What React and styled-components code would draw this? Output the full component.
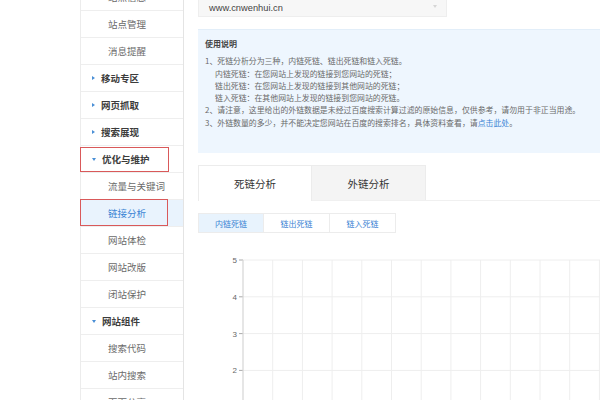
import React from "react";
import styled, { createGlobalStyle } from "styled-components";

const Global = createGlobalStyle`
  html, body { margin: 0; padding: 0; background: #fff; }
  body { width: 600px; height: 400px; overflow: hidden; font-family: "Noto Sans CJK SC", "Microsoft YaHei", sans-serif; }
`;

const Page = styled.div`
  display: flex;
  width: 600px;
  height: 400px;
  overflow: hidden;
`;

const Spacer = styled.div`
  width: 80px;
  flex: none;
`;

const Sidebar = styled.nav`
  width: 104px;
  flex: none;
  margin-top: -16px;
  border-left: 1px solid #ececec;
  border-right: 1px solid #e4e4e4;
  box-sizing: border-box;
  display: flex;
  flex-direction: column;
`;

const Row = styled.div`
  position: relative;
  height: 27px;
  flex: none;
  box-sizing: border-box;
  border-bottom: 1px solid #eeeeee;
  display: flex;
  align-items: center;
  font-size: 9.5px;
  padding-left: ${(p) => (p.$group ? "11px" : "27px")};
  color: ${(p) => (p.$active ? "#3a84d4" : p.$group ? "#3c3c3c" : "#6a6a6a")};
  background: ${(p) => (p.$active ? "#e9f3fd" : "#fff")};
  font-weight: ${(p) => (p.$group ? 600 : 400)};
  white-space: nowrap;
`;

const Arrow = styled.span`
  width: 0;
  height: 0;
  margin-right: 6px;
  ${(p) =>
    p.$open
      ? `border-left: 2.5px solid transparent; border-right: 2.5px solid transparent; border-top: 3px solid #4a8fd6;`
      : `border-top: 2.5px solid transparent; border-bottom: 2.5px solid transparent; border-left: 3px solid #4a8fd6;`}
`;

const Mark = styled.div`
  position: absolute;
  left: -1px;
  top: ${(p) => p.$top}px;
  width: ${(p) => p.$w}px;
  height: ${(p) => p.$h}px;
  box-sizing: border-box;
  border: 1px solid #d9595a;
  pointer-events: none;
`;

const Main = styled.main`
  flex: 1;
  padding-left: 14px;
  display: flex;
  flex-direction: column;
  min-width: 0;
  & > * { flex: none; }
`;

const Select = styled.div`
  margin-top: -1px;
  width: 249px;
  height: 18px;
  box-sizing: border-box;
  background: #f7f7f7;
  border: 1px solid #eeeeee;
  border-top: none;
  display: flex;
  align-items: center;
  justify-content: space-between;
  padding: 0 9px 0 10px;
  font-family: "Liberation Sans", Arial, sans-serif;
  font-size: 9.3px;
  color: #444;
`;

const Caret = styled.span`
  width: 0;
  height: 0;
  border-left: 2.5px solid transparent;
  border-right: 2.5px solid transparent;
  border-top: 3px solid #d6d6d6;
  margin-top: -3px;
`;

const Info = styled.section`
  margin-top: 12px;
  height: 124px;
  box-sizing: border-box;
  background: #eef6fe;
  border-top: 1px solid #e2eef9;
  padding: 8px 0 0 7px;
  font-size: 7.9px;
  color: #6a6a6a;
  line-height: 12.3px;
  white-space: nowrap;
  overflow: hidden;
`;

const InfoTitle = styled.div`
  font-weight: 700;
  color: #444;
  font-size: 8px;
  margin-bottom: 5px;
`;

const Line = styled.div`
  padding-left: ${(p) => (p.$indent ? "10px" : "0")};
`;

const Link = styled.span`
  color: #3a84d4;
`;

const Tabs = styled.div`
  margin-top: 12px;
  display: flex;
  height: 35px;
  border-bottom: 1px solid #f0f0f0;
  box-sizing: content-box;
`;

const Tab = styled.div`
  width: 114px;
  height: ${(p) => (p.$active ? "36px" : "35px")};
  box-sizing: border-box;
  display: flex;
  align-items: center;
  justify-content: center;
  font-size: 10.5px;
  color: #333;
  background: ${(p) => (p.$active ? "#fff" : "#f4f4f4")};
  border: 1px solid #ececec;
  border-bottom: none;
  border-left: ${(p) => (p.$active ? "1px solid #ececec" : "none")};
`;

const SubTabs = styled.div`
  margin-top: 12px;
  display: flex;
`;

const SubTab = styled.div`
  width: 66px;
  height: 20px;
  box-sizing: border-box;
  display: flex;
  align-items: center;
  justify-content: center;
  font-size: 8px;
  color: #3a84d4;
  background: ${(p) => (p.$active ? "#e8f3fd" : "#fff")};
  border: 1px solid #ececec;
  border-left: ${(p) => (p.$first ? "1px solid #ececec" : "none")};
`;

const ChartWrap = styled.div`
  margin-top: 17px;
  margin-left: -14px;
`;

const menu = [
  { t: "站点信息" },
  { t: "站点管理" },
  { t: "消息提醒" },
  { t: "移动专区", g: true },
  { t: "网页抓取", g: true },
  { t: "搜索展现", g: true },
  { t: "优化与维护", g: true, open: true, mark: { top: 1, w: 89, h: 25 } },
  { t: "流量与关键词" },
  { t: "链接分析", active: true, mark: { top: -1, w: 88, h: 27 } },
  { t: "网站体检" },
  { t: "网站改版" },
  { t: "闭站保护" },
  { t: "网站组件", g: true, open: true },
  { t: "搜索代码" },
  { t: "站内搜索" },
  { t: "页面分享" },
];

function Chart() {
  const ax = 59;
  const ys = [10, 46.8, 83.6, 120.4, 157.2];
  const labels = ["5", "4", "3", "2", "1"];
  const xs = [];
  for (let k = 1; k <= 12; k++) xs.push(ax + 30 * k - 0.3 * k);
  return (
    <svg width="416" height="150" viewBox="0 0 416 150">
      {xs.map((x) => (
        <line key={x} x1={x} y1={10} x2={x} y2={150} stroke="#eeeeee" strokeWidth="1" />
      ))}
      {ys.map((y, i) => (
        <g key={y}>
          <line x1={ax} y1={y} x2={416} y2={y} stroke="#eeeeee" strokeWidth="1" />
          <line x1={ax - 4} y1={y} x2={ax} y2={y} stroke="#aaaaaa" strokeWidth="1" />
          <text
            x={ax - 6}
            y={y + 3}
            textAnchor="end"
            fontSize="8"
            fill="#666"
            fontFamily="Liberation Sans, Arial, sans-serif"
          >
            {labels[i]}
          </text>
        </g>
      ))}
      <line x1={ax} y1={10} x2={ax} y2={150} stroke="#d6d6d6" strokeWidth="1.2" />
    </svg>
  );
}

export default function App() {
  return (
    <Page>
      <Global />
      <Spacer />
      <Sidebar>
        {menu.map((m) => (
          <Row key={m.t} $group={m.g} $active={m.active}>
            {m.g && <Arrow $open={m.open} />}
            {m.t}
            {m.mark && <Mark $top={m.mark.top} $w={m.mark.w} $h={m.mark.h} />}
          </Row>
        ))}
      </Sidebar>
      <Main>
        <Select>
          www.cnwenhui.cn
          <Caret />
        </Select>
        <Info>
          <InfoTitle>使用说明</InfoTitle>
          <Line>1、死链分析分为三种，内链死链、链出死链和链入死链。</Line>
          <Line $indent>内链死链：在您网站上发现的链接到您网站的死链；</Line>
          <Line $indent>链出死链：在您网站上发现的链接到其他网站的死链；</Line>
          <Line $indent>链入死链：在其他网站上发现的链接到您网站的死链。</Line>
          <Line>2、请注意，这里给出的外链数据是未经过百度搜索计算过滤的原始信息，仅供参考，请勿用于非正当用途。</Line>
          <Line>
            3、外链数量的多少，并不能决定您网站在百度的搜索排名，具体资料查看，请<Link>点击此处</Link>。
          </Line>
        </Info>
        <Tabs>
          <Tab $active>死链分析</Tab>
          <Tab>外链分析</Tab>
        </Tabs>
        <SubTabs>
          <SubTab $active $first>内链死链</SubTab>
          <SubTab>链出死链</SubTab>
          <SubTab>链入死链</SubTab>
        </SubTabs>
        <ChartWrap>
          <Chart />
        </ChartWrap>
      </Main>
    </Page>
  );
}
